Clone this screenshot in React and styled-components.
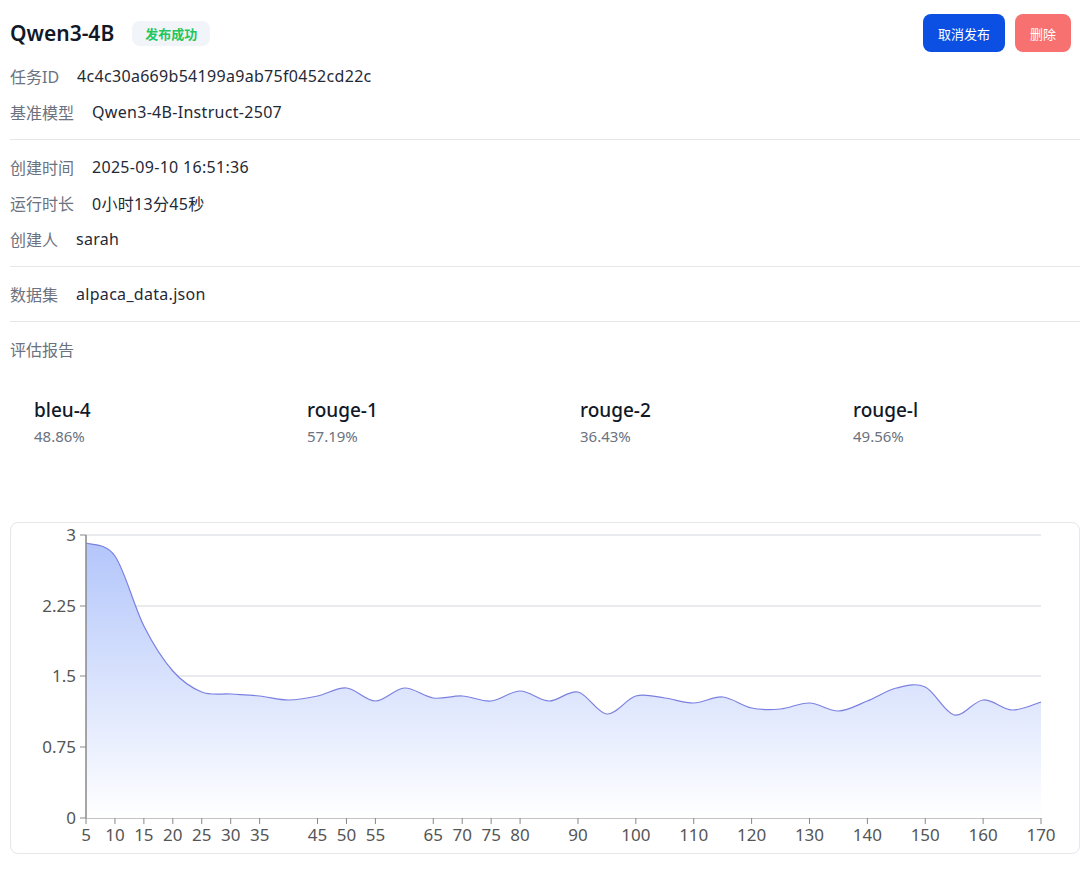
import React from "react";
import styled, { createGlobalStyle } from "styled-components";

const Global = createGlobalStyle`
  body { margin: 0; background: #fff; font-family: "Noto Sans", "Noto Sans CJK SC", sans-serif; color: #1f2937; }
`;

const Page = styled.div`
  padding: 0 0 0 10px;
`;

const Header = styled.div`
  display: flex;
  align-items: center;
  justify-content: space-between;
  height: 58px;
  padding-top: 8px;
  box-sizing: border-box;
  padding-right: 9px;
`;

const TitleWrap = styled.div`
  display: flex;
  align-items: center;
  gap: 18px;
`;

const Title = styled.h1`
  margin: 0;
  font-size: 21px;
  font-weight: 600;
  color: #111827;
`;

const Badge = styled.span`
  background: #f1f5f9;
  color: #22c55e;
  font-size: 13px;
  font-weight: 600;
  padding: 3px 13px;
  border-radius: 8px;
`;

const Actions = styled.div`
  display: flex;
  gap: 10px;
`;

const Button = styled.button`
  border: none;
  border-radius: 8px;
  height: 38px;
  padding: 0 15px;
  font-size: 13px;
  font-family: inherit;
  color: #fff;
  background: ${(p) => (p.$danger ? "#f87171" : "#0b4fe3")};
`;

const Row = styled.div`
  display: flex;
  gap: 18px;
  height: 36px;
  align-items: center;
  font-size: 16px;
`;

const Label = styled.span`
  color: #6b7280;
`;

const Value = styled.span`
  color: #1f2937;
  letter-spacing: 0.3px;
`;

const Divider = styled.div`
  height: 1px;
  background: #e5e7eb;
  margin: 9px 0;
`;

const Metrics = styled.div`
  display: grid;
  grid-template-columns: repeat(4, 273px);
  padding: 30px 24px 0;
  height: 155px;
  box-sizing: border-box;
`;

const MetricName = styled.div`
  font-size: 19px;
  font-weight: 500;
  color: #111827;
`;

const MetricValue = styled.div`
  margin-top: 3px;
  font-size: 15px;
  color: #6b7280;
`;

const ChartCard = styled.div`
  border: 1px solid #e5e7eb;
  border-radius: 8px;
  height: 330px;
  overflow: hidden;
`;

const data = [
  [5, 557], [10, 570], [15, 640], [20, 685], [25, 706], [30, 708], [35, 710], [40, 714],
  [45, 710], [50, 702], [55, 715], [60, 702], [65, 712], [70, 710], [75, 715], [80, 705],
  [85, 715], [90, 706], [95, 728], [100, 710], [105, 712], [110, 717], [115, 711], [120, 722],
  [125, 723], [130, 717], [135, 725], [140, 715], [145, 702], [150, 701], [155, 729], [160, 714],
  [165, 724], [170, 716],
];
const ox = 10, oy = 537;
const X = (v) => 85 + (v - 5) * (955 / 165) - ox;
const pts = data.map(([v, y]) => [X(v), y - oy]);

function smooth(p) {
  let d = `M${p[0][0]},${p[0][1]}`;
  for (let i = 0; i < p.length - 1; i++) {
    const p0 = p[i - 1] || p[i], p1 = p[i], p2 = p[i + 1], p3 = p[i + 2] || p2;
    const c1 = [p1[0] + (p2[0] - p0[0]) / 6, p1[1] + (p2[1] - p0[1]) / 6];
    const c2 = [p2[0] - (p3[0] - p1[0]) / 6, p2[1] - (p3[1] - p1[1]) / 6];
    d += ` C${c1[0]},${c1[1]} ${c2[0]},${c2[1]} ${p2[0]},${p2[1]}`;
  }
  return d;
}

const line = smooth(pts);
const baseY = 832 - oy;
const area = `${line} L${pts[pts.length - 1][0]},${baseY} L${pts[0][0]},${baseY} Z`;
const yTicks = [["3", 549], ["2.25", 620], ["1.5", 690], ["0.75", 761], ["0", 832]];
const xLabels = [5, 10, 15, 20, 25, 30, 35, 45, 50, 55, 65, 70, 75, 80, 90, 100, 110, 120, 130, 140, 150, 160, 170];

const Chart = () => (
  <svg width="1070" height="330" style={{ display: "block" }}>
    <defs>
      <linearGradient id="g" x1="0" y1="0" x2="0" y2="1">
        <stop offset="0" stopColor="#b3c6fb" />
        <stop offset="1" stopColor="#ffffff" />
      </linearGradient>
    </defs>
    {yTicks.map(([t, y]) => (
      <g key={t}>
        <line x1={75} x2={1030} y1={y - oy} y2={y - oy} stroke={t === "0" ? "#888" : "#d1d5db"} />
        <line x1={69} x2={75} y1={y - oy} y2={y - oy} stroke="#888" />
        <text x={65} y={y - oy + 6} textAnchor="end" fontSize="17" fill="#555" fontFamily="Noto Sans">{t}</text>
      </g>
    ))}
    <path d={area} fill="url(#g)" />
    <path d={line} fill="none" stroke="#7b80e0" strokeWidth="1.2" />
    <line x1={75} x2={75} y1={549 - oy} y2={baseY} stroke="#888" strokeWidth="1.5" />
    {xLabels.map((v) => (
      <g key={v}>
        <line x1={X(v)} x2={X(v)} y1={baseY} y2={baseY + 6} stroke="#888" />
        <text x={X(v)} y={baseY + 23} textAnchor="middle" fontSize="17" fill="#555" fontFamily="Noto Sans">{v}</text>
      </g>
    ))}
  </svg>
);

const metrics = [
  ["bleu-4", "48.86%"],
  ["rouge-1", "57.19%"],
  ["rouge-2", "36.43%"],
  ["rouge-l", "49.56%"],
];

export default function App() {
  return (
    <Page>
      <Global />
      <Header>
        <TitleWrap>
          <Title>Qwen3-4B</Title>
          <Badge>发布成功</Badge>
        </TitleWrap>
        <Actions>
          <Button>取消发布</Button>
          <Button $danger>删除</Button>
        </Actions>
      </Header>
      <Row><Label>任务ID</Label><Value>4c4c30a669b54199a9ab75f0452cd22c</Value></Row>
      <Row><Label>基准模型</Label><Value>Qwen3-4B-Instruct-2507</Value></Row>
      <Divider />
      <Row><Label>创建时间</Label><Value>2025-09-10 16:51:36</Value></Row>
      <Row><Label>运行时长</Label><Value>0小时13分45秒</Value></Row>
      <Row><Label>创建人</Label><Value>sarah</Value></Row>
      <Divider />
      <Row><Label>数据集</Label><Value>alpaca_data.json</Value></Row>
      <Divider />
      <Row><Label>评估报告</Label></Row>
      <Metrics>
        {metrics.map(([n, v]) => (
          <div key={n}>
            <MetricName>{n}</MetricName>
            <MetricValue>{v}</MetricValue>
          </div>
        ))}
      </Metrics>
      <ChartCard>
        <Chart />
      </ChartCard>
    </Page>
  );
}
